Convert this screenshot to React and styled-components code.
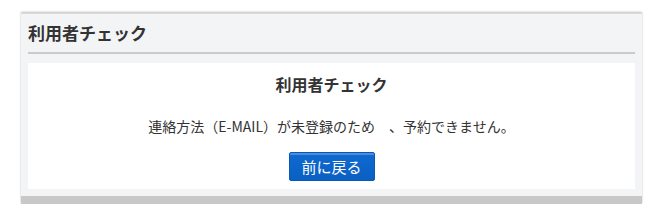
import styled, { createGlobalStyle } from 'styled-components';

const GlobalStyle = createGlobalStyle`
body {
  margin: 0;
  background: #ffffff;
  font-family: "Noto Sans CJK JP", "Noto Sans", "Liberation Sans", sans-serif;
  color: #333333;
}
`

const Page = styled.div`
padding: 13px 12px 0 21px;
`

const Panel = styled.section`
width: 621px;
background-color: #f3f4f6;
box-shadow: 0 -1px 2px rgba(0, 0, 0, 0.25);
border-top: 1px solid #dadada;
border-bottom: 8px solid #c8c8c8;
padding: 0 7px 7px 7px;
box-sizing: border-box;
`

const Heading = styled.h2`
margin: 0;
height: 37px;
padding-bottom: 1px;
display: flex;
align-items: center;
font-size: 17px;
font-weight: bold;
color: #333333;
border-bottom: 2px solid #cbcbcb;
`

const Card = styled.div`
margin-top: 9px;
background-color: #ffffff;
display: flex;
flex-direction: column;
align-items: center;
padding: 10px 0 8px;
`

const Title = styled.h3`
margin: 0;
font-size: 16px;
line-height: 22px;
font-weight: bold;
color: #333333;
`

const Message = styled.p`
margin: 21px 0 16px;
font-size: 14px;
line-height: 20px;
color: #333333;
`

const BackButton = styled.button`
width: 86px;
height: 29px;
background: linear-gradient(#0f6ad0, #0a5fc2);
border: 1px solid #0858b6;
border-radius: 2px;
box-shadow: inset 0 2px 0 rgba(255, 255, 255, 0.25);
color: #ffffff;
font-family: inherit;
font-size: 15px;
cursor: pointer;
padding: 0;
`

export default function App() {
    return (
        <>
            <GlobalStyle />
            <Page>
                <Panel>
                    <Heading>利用者チェック</Heading>
                    <Card>
                        <Title>利用者チェック</Title>
                        <Message>連絡方法（E-MAIL）が未登録のため　、予約できません。</Message>
                        <BackButton>前に戻る</BackButton>
                    </Card>
                </Panel>
            </Page>
        </>
    )
}
